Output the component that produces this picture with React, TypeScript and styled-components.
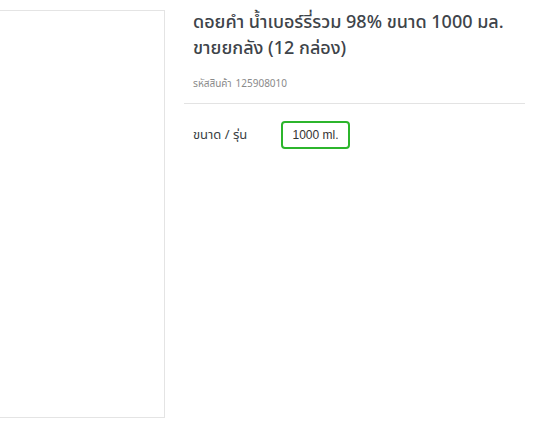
import React from "react";
import styled, { createGlobalStyle } from "styled-components";

const GlobalStyle = createGlobalStyle`
  html, body {
    margin: 0;
    padding: 0;
    background: #ffffff;
  }
  body {
    font-family: "Noto Sans Thai", "Noto Sans", "Liberation Sans", sans-serif;
    color: #3c4146;
    overflow: hidden;
  }
`;

const Page = styled.div`
  display: flex;
  align-items: flex-start;
  width: 534px;
  height: 429px;
  overflow: hidden;
`;

/* product picture frame (left column, partly off-screen) */
const ImageBox = styled.div`
  flex: 0 0 auto;
  width: 166px;
  height: 408px;
  margin: 10px 0 0 -1px;
  box-sizing: border-box;
  border: 1px solid #e4e4e4;
  background: #ffffff;
`;

const Info = styled.div`
  flex: 0 0 auto;
  width: 341px;
  margin-left: 19px;
  padding-top: 10px;
`;

const Title = styled.h1`
  margin: 0;
  padding: 0 9px;
  font-size: 18px;
  font-weight: 500;
  line-height: 26px;
  color: #3e444a;
`;

const Sku = styled.div`
  padding: 0 9px;
  margin-top: 15px;
  font-size: 10px;
  line-height: 14px;
  color: #8a8a8a;

  span {
    margin-left: 4px;
  }
`;

const Divider = styled.hr`
  margin: 12px 0 0;
  border: 0;
  border-top: 1px solid #e3e3e3;
`;

const OptionRow = styled.div`
  display: flex;
  align-items: center;
  padding: 17px 9px 0;
`;

const OptionLabel = styled.div`
  width: 88px;
  font-size: 13px;
  color: #3a3f44;
`;

const OptionButton = styled.button<{ $active?: boolean }>`
  box-sizing: border-box;
  height: 28px;
  min-width: 69px;
  padding: 0 9px;
  border: 2px solid ${(p) => (p.$active ? "#2cb52c" : "#d5d5d5")};
  border-radius: 4px;
  background: #ffffff;
  font-family: "Liberation Sans", "Noto Sans", sans-serif;
  font-size: 12px;
  color: #333;
  cursor: pointer;
`;

export default function App() {
  return (
    <>
      <GlobalStyle />
      <Page>
        <ImageBox />
        <Info>
          <Title>ดอยคำ น้ำเบอร์รี่รวม 98% ขนาด 1000 มล. ขายยกลัง (12 กล่อง)</Title>
          <Sku>
            รหัสสินค้า<span>125908010</span>
          </Sku>
          <Divider />
          <OptionRow>
            <OptionLabel>ขนาด / รุ่น</OptionLabel>
            <OptionButton $active>1000 ml.</OptionButton>
          </OptionRow>
        </Info>
      </Page>
    </>
  );
}
